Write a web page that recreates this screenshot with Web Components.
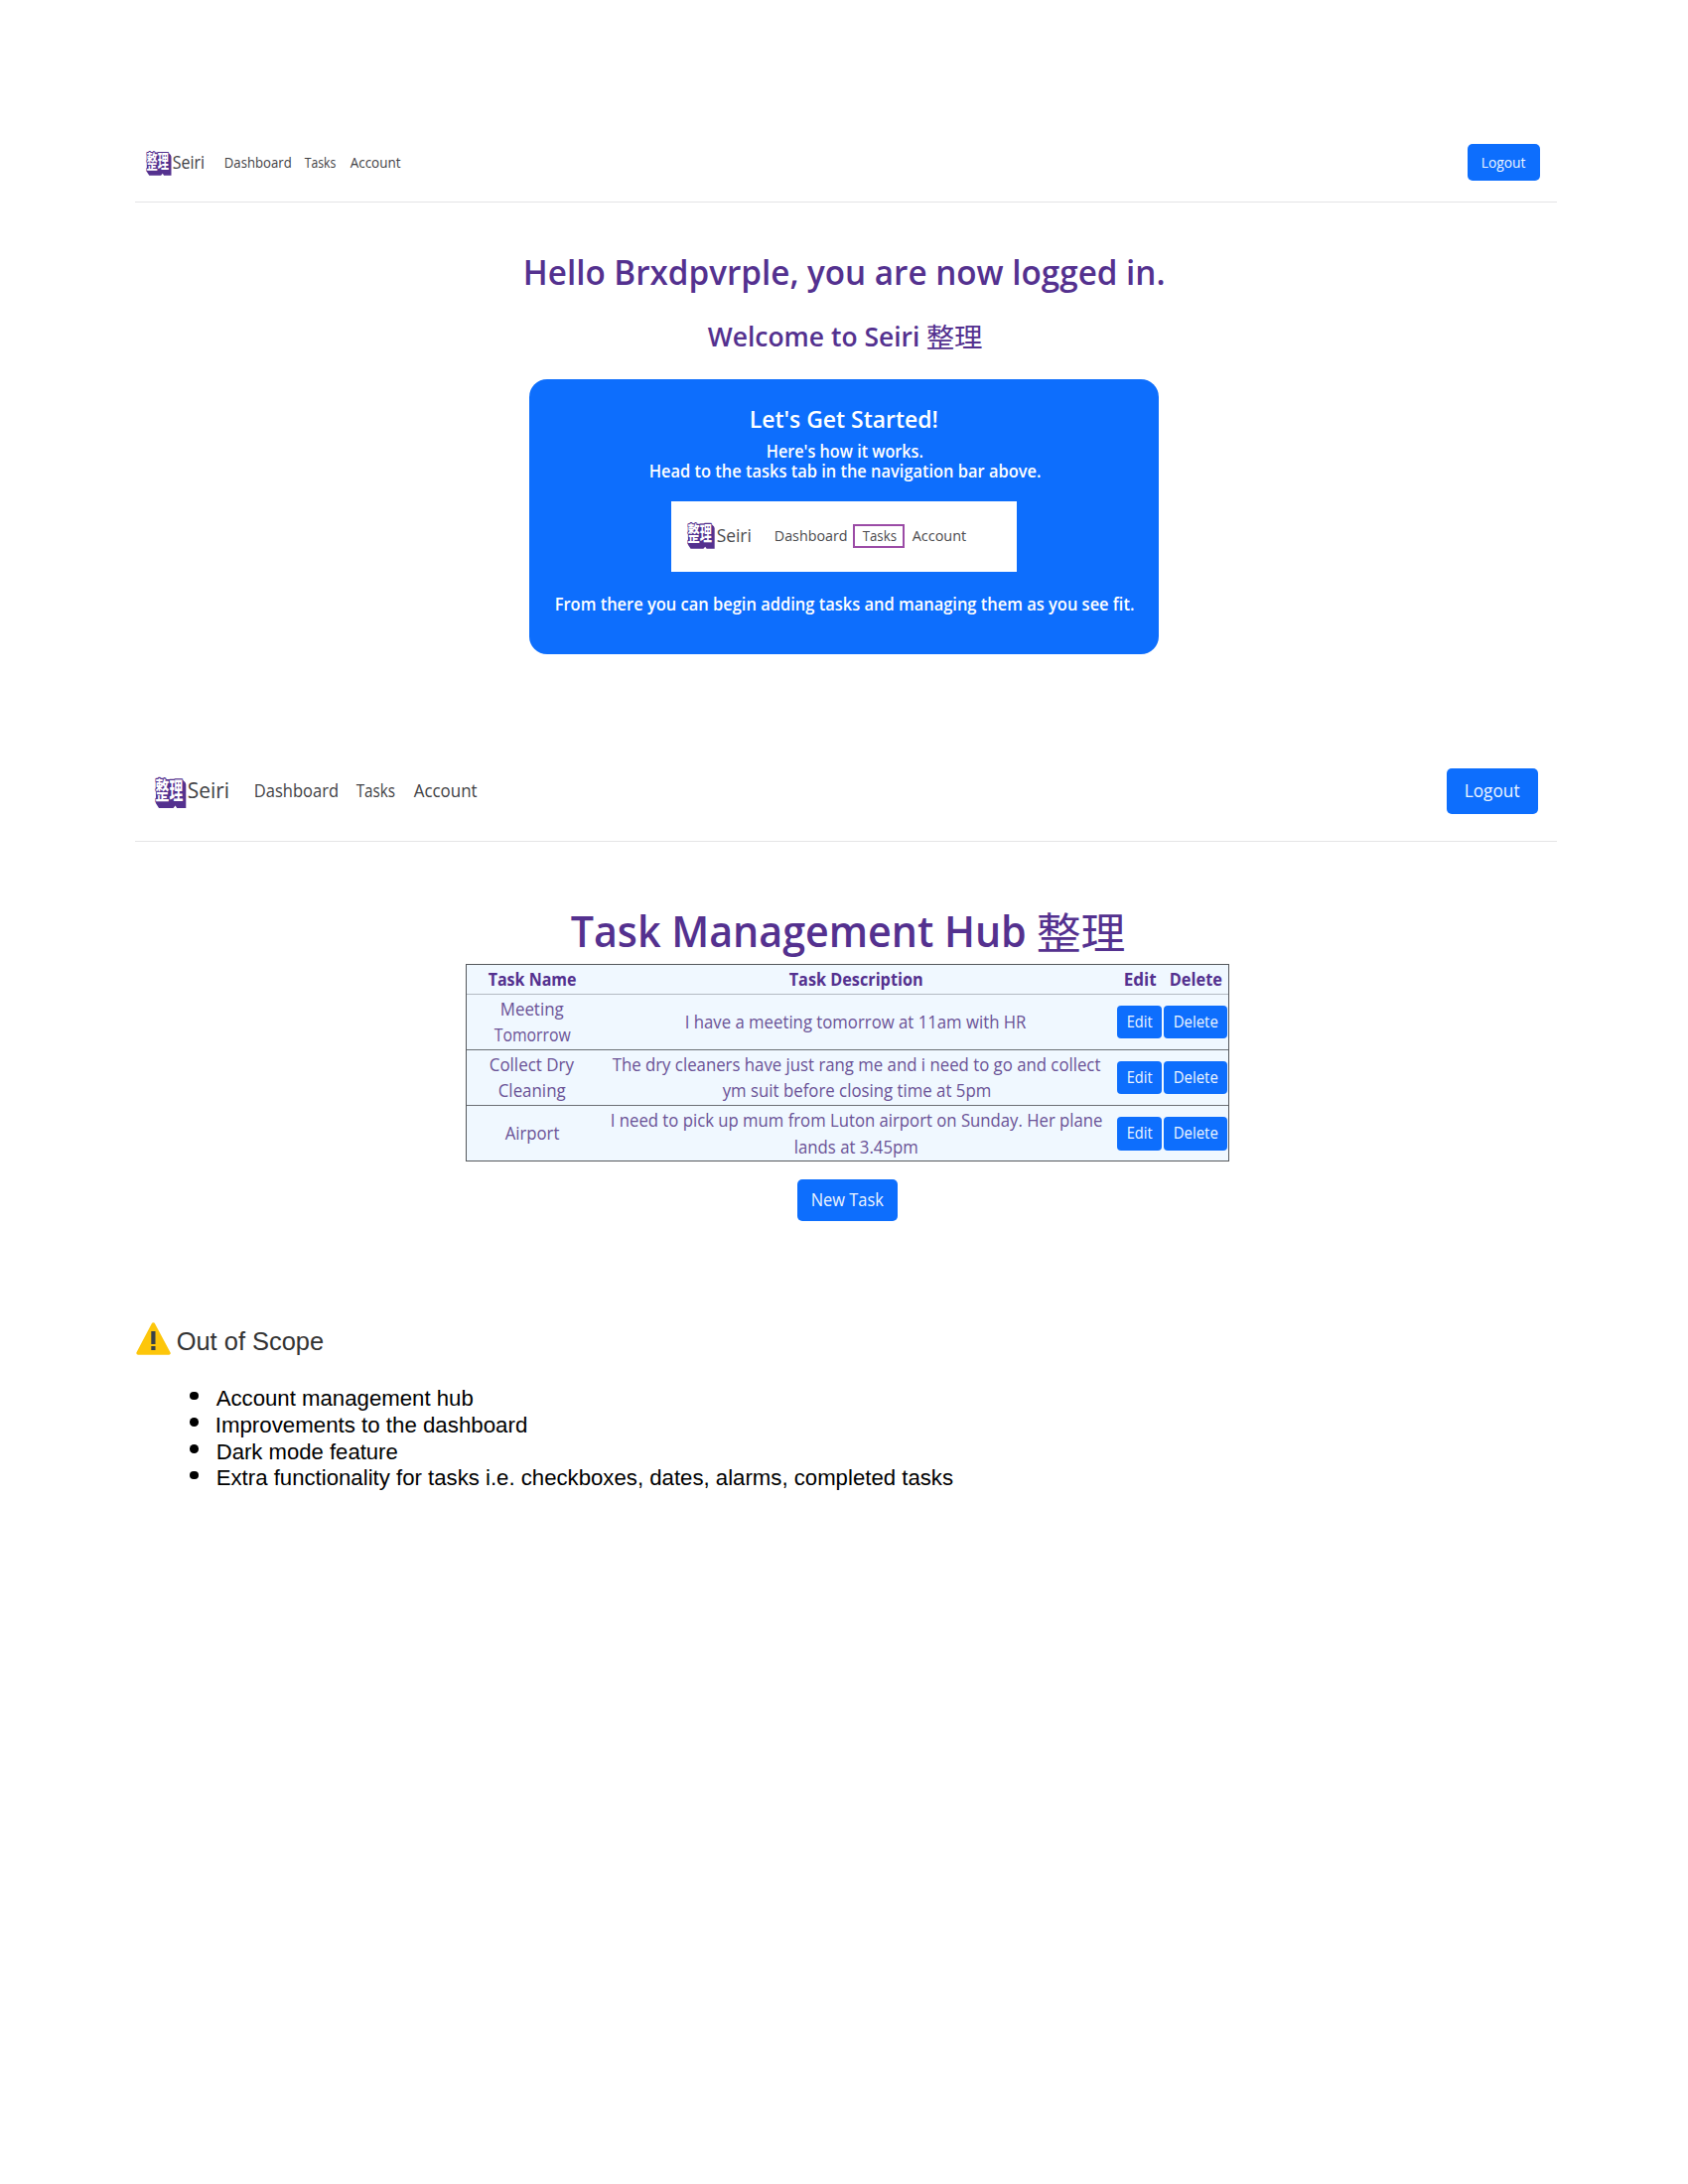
<!DOCTYPE html>
<html lang="en">
<head>
<meta charset="utf-8">
<title>Seiri</title>
<style>
body{margin:0;background:#fff;width:1700px;height:2200px;overflow:hidden;font-family:"Open Sans","Noto Sans CJK JP",sans-serif}
</style>
</head>
<body>
<seiri-page></seiri-page>
<script>
const measure = document.createElement('canvas').getContext('2d');

/* One line of text whose ink spans exactly the width given in "w". */
class FitText extends HTMLElement {
  connectedCallback() {
    const w = +this.getAttribute('w');
    const root = this.attachShadow({ mode: 'open' });
    root.innerHTML = `<style>
      :host{display:block;flex:none;width:${w}px;height:1em;line-height:1;white-space:pre;text-align:left}
      span{display:inline-block;line-height:1;transform-origin:0 50%}
      </style><span><slot></slot></span>`;
    const cs = getComputedStyle(this);
    measure.font = `${cs.fontWeight} ${cs.fontSize} ${cs.fontFamily}`;
    const m = measure.measureText(this.textContent);
    const ink = m.actualBoundingBoxRight + m.actualBoundingBoxLeft;
    const k = w / ink;
    root.querySelector('span').style.transform =
      `translateX(${(m.actualBoundingBoxLeft * k + 0.7).toFixed(2)}px) scaleX(${k.toFixed(4)})`;
  }
}

class SeiriLogo extends HTMLElement {
  connectedCallback() {
    this.attachShadow({ mode: 'open' }).innerHTML = `<style>
      :host{display:block;flex:none}
      svg{display:block;width:100%;height:100%;overflow:visible}
      text{font:700 15px "Noto Sans CJK JP",sans-serif;fill:#fff;stroke:#54318f;stroke-width:1.7px;paint-order:stroke;stroke-linejoin:round}
      </style>
      <svg viewBox="0 0 31 31" preserveAspectRatio="none">
        <path fill="#54318f" d="M1.2 2H27l3.2 3 .8 2v23.7H22l-1.6-2.4-2 2.4H4L1 26z"/>
        <text transform="translate(.6 22.2) scale(.93 1.58)" textLength="29.4" lengthAdjust="spacingAndGlyphs">整理</text>
      </svg>`;
  }
}

class UiButton extends HTMLElement {
  connectedCallback() {
    this.attachShadow({ mode: 'open' }).innerHTML = `<style>
      :host{display:flex;flex:none;box-sizing:border-box;align-items:center;justify-content:center;background:#0d6efd;color:#eef5ff;border-radius:var(--r,5px)}
      </style><slot></slot>`;
  }
}

class SiteNav extends HTMLElement {
  connectedCallback() {
    this.attachShadow({ mode: 'open' }).innerHTML = `<style>
      :host{display:flex;box-sizing:border-box;align-items:center;color:#3f4144}
      ::slotted(ui-button){margin-left:auto}
      </style><slot></slot>`;
  }
}

class WelcomeCard extends HTMLElement {
  connectedCallback() {
    this.attachShadow({ mode: 'open' }).innerHTML = `<style>
      :host{display:flex;flex-direction:column;align-items:center;box-sizing:border-box;width:634.5px;height:277.5px;background:#0d6efd;border-radius:18px;color:#fff;font-weight:600;font-size:17.3px}
      .title{font-size:24px;margin-top:28.6px}
      .l1{margin-top:11.5px}
      .l2{margin-top:3px}
      .shot{display:flex;align-items:center;box-sizing:border-box;width:348.5px;height:71.5px;margin-top:21.3px;padding:0 0 2px 16.3px;background:#fff;color:#4a4a4d;font-weight:400;font-size:15.3px}
      .shot seiri-logo{width:27.7px;height:27px}
      .brand{font-size:18.6px;margin:0 24.5px 1px 1px}
      .mark{display:flex;align-items:center;justify-content:center;box-sizing:border-box;width:52px;height:24px;border:2px solid #9b4ba6;margin:0 7px 0 7px}
      .l3{margin-top:23.5px}
      </style>
      <fit-text class="title" w="187.5">Let's Get Started!</fit-text>
      <fit-text class="l1" w="156.5">Here's how it works.</fit-text>
      <fit-text class="l2" w="393">Head to the tasks tab in the navigation bar above.</fit-text>
      <div class="shot"><seiri-logo></seiri-logo><fit-text class="brand" w="34.5">Seiri</fit-text>
      <fit-text w="72.5">Dashboard</fit-text><div class="mark"><fit-text w="34">Tasks</fit-text></div><fit-text w="55">Account</fit-text></div>
      <fit-text class="l3" w="582">From there you can begin adding tasks and managing them as you see fit.</fit-text>`;
  }
}

class TaskTable extends HTMLElement {
  connectedCallback() {
    const rows = [
      [[['Meeting', 63.5], ['Tomorrow', 77.5]], [['I have a meeting tomorrow at 11am with HR', 343]]],
      [[['Collect Dry', 84.5], ['Cleaning', 67.5]], [['The dry cleaners have just rang me and i need to go and collect', 491.5], ['ym suit before closing time at 5pm', 269.5]]],
      [[['Airport', 54.5]], [['I need to pick up mum from Luton airport on Sunday. Her plane', 494], ['lands at 3.45pm', 123]]]
    ];
    const lines = c => c.map(([t, w]) => `<fit-text w="${w}">${t}</fit-text>`).join('');
    this.attachShadow({ mode: 'open' }).innerHTML = `<style>
      :host{display:block;box-sizing:border-box;width:769px;height:199px;background:#f0f8ff;border:1px solid #55585c;border-left-width:1.5px;color:#6a5296;font-size:17.4px}
      .row{display:grid;grid-template-columns:132px 522px 46px 64px;column-gap:0;box-sizing:border-box;height:56px;border-bottom:1px solid #6c7075;align-items:center}
      .row:last-child{border-bottom:0}
      .head{height:30px;border-color:#b4bac2;font-weight:700;color:#54318f}
      .cell{display:flex;flex-direction:column;align-items:center;gap:9px}
      .cell:first-child{padding-right:1px}
      .cell:nth-child(2){padding-right:3px}
      .head .cell{padding-top:1px}
      ui-button{height:33.5px;font-size:15.4px;--r:4px}
      .e{width:45.7px;margin-left:.6px}.d{width:63.7px;margin-left:2px}
      .head .c4{padding-left:3px}
      .head .c3{padding-left:.8px}
      </style>
      <div class="row head"><div class="cell"><fit-text w="88.5">Task Name</fit-text></div><div class="cell"><fit-text w="134.5">Task Description</fit-text></div><div class="cell c3"><fit-text w="31.5">Edit</fit-text></div><div class="cell c4"><fit-text w="52">Delete</fit-text></div></div>
      ${rows.map(r => `<div class="row"><div class="cell">${lines(r[0])}</div><div class="cell">${lines(r[1])}</div><ui-button class="e"><fit-text w="25.5">Edit</fit-text></ui-button><ui-button class="d"><fit-text w="43.5">Delete</fit-text></ui-button></div>`).join('')}`;
  }
}

class ScopeNotes extends HTMLElement {
  connectedCallback() {
    const items = [['Account management hub', 258.5, 0], ['Improvements to the dashboard', 312, 1.3], ['Dark mode feature', 181.5, 1], ['Extra functionality for tasks i.e. checkboxes, dates, alarms, completed tasks', 741, 1]];
    this.attachShadow({ mode: 'open' }).innerHTML = `<style>
      :host{display:block;font-family:"Liberation Sans",sans-serif}
      h3{display:flex;margin:0;font-weight:400;font-size:25px;color:#333;height:33px}
      svg{display:block;width:35px;height:33px;margin:0 6.8px 0 .5px}
      h3 fit-text{margin-top:6.8px}
      ul{list-style:none;margin:33px 0 0 55px;padding:0;font-size:22.6px;color:#000}
      li{display:flex;height:26.6px;align-items:flex-start}
      i{width:8.6px;height:8.6px;border-radius:50%;background:#000;margin:3.4px 17px 0 0}
      </style>
      <h3><svg viewBox="0 0 35 33"><path d="M17.4 2.2 32.9 31H2.1z" fill="#fdc60b" stroke="#fdc60b" stroke-width="3.6" stroke-linejoin="round"/><path d="M15.3 9h4.2v13h-4.2zM15.3 24h4.2v4h-4.2z" fill="#37414a"/></svg><fit-text w="146.5">Out of Scope</fit-text></h3>
      <ul>${items.map(([t, w, m]) => `<li><i></i><fit-text w="${w}" style="margin-left:${m}px">${t}</fit-text></li>`).join('')}</ul>`;
  }
}

class SeiriPage extends HTMLElement {
  connectedCallback() {
    this.attachShadow({ mode: 'open' }).innerHTML = `<style>
      :host{display:block;box-sizing:border-box;padding:136px 132px 0 136px}
      .nav1{height:68px;padding:0 17.5px 12px 10.7px;border-bottom:1.5px solid #e4e4e6;font-size:15px}
      .nav1 seiri-logo{width:25.5px;height:25px;margin-top:2px}
      .nav1 .brand{font-size:17.6px;margin:0 21.7px 0 .4px}
      .nav1 ui-button{width:73px;height:37px}
      .nav1 .t{margin:0 14px}
      .hero{display:flex;flex-direction:column;align-items:center;color:#54318f;font-weight:600;padding-left:3px;padding-right:7px}
      .h1{font-size:34.4px;margin:53px -1px 0 0}
      .h2{display:flex;font-size:27.8px;gap:9px;margin:33.2px 0 0;height:28px}
      .cjk{font-family:"Noto Sans CJK JP",sans-serif;font-weight:400}
      welcome-card{margin-top:29.2px}
      .nav2{height:93px;margin-top:95.9px;padding:0 19.5px 8.4px 19.5px;border-bottom:1.5px solid #e4e4e6;font-size:17.8px}
      .nav2 seiri-logo{width:31.3px;height:31.3px;margin-top:3px}
      .nav2 .brand{font-size:21.6px;margin:0 27.6px 1.5px 1.8px}
      .nav2 ui-button{width:92px;height:46.7px}
      .nav2 .t{margin:0 18.5px}
      .hub{display:flex;flex-direction:column;align-items:flex-start}
      .title{display:flex;gap:13.7px;font-size:43px;font-weight:600;color:#54318f;margin:67.4px 0 0 437.5px;height:43px}
      task-table{margin:12.5px 0 0 333px}
      .new{width:101.5px;height:42px;font-size:17.4px;margin:17.5px 0 0 666.5px}
      scope-notes{margin-top:102.8px}
      </style>
      <site-nav class="nav1"><seiri-logo></seiri-logo><fit-text class="brand" w="32">Seiri</fit-text><fit-text w="66">Dashboard</fit-text><fit-text class="t" w="31.5">Tasks</fit-text><fit-text w="50.5">Account</fit-text><ui-button><fit-text w="43.5">Logout</fit-text></ui-button></site-nav>
      <div class="hero">
        <fit-text class="h1" w="642.5">Hello Brxdpvrple, you are now logged in.</fit-text>
        <div class="h2"><fit-text w="212">Welcome to Seiri</fit-text><fit-text class="cjk" w="55">整理</fit-text></div>
        <welcome-card></welcome-card>
      </div>
      <site-nav class="nav2"><seiri-logo></seiri-logo><fit-text class="brand" w="40">Seiri</fit-text><fit-text w="83.5">Dashboard</fit-text><fit-text class="t" w="39">Tasks</fit-text><fit-text w="63.5">Account</fit-text><ui-button><fit-text w="54.5">Logout</fit-text></ui-button></site-nav>
      <div class="hub">
        <div class="title"><fit-text w="457.3">Task Management Hub</fit-text><fit-text class="cjk" w="87.5">整理</fit-text></div>
        <task-table></task-table>
        <ui-button class="new"><fit-text w="72">New Task</fit-text></ui-button>
      </div>
      <scope-notes></scope-notes>`;
  }
}

customElements.define('fit-text', FitText);
customElements.define('seiri-logo', SeiriLogo);
customElements.define('ui-button', UiButton);
customElements.define('site-nav', SiteNav);
customElements.define('welcome-card', WelcomeCard);
customElements.define('task-table', TaskTable);
customElements.define('scope-notes', ScopeNotes);
customElements.define('seiri-page', SeiriPage);
</script>
</body>
</html>
